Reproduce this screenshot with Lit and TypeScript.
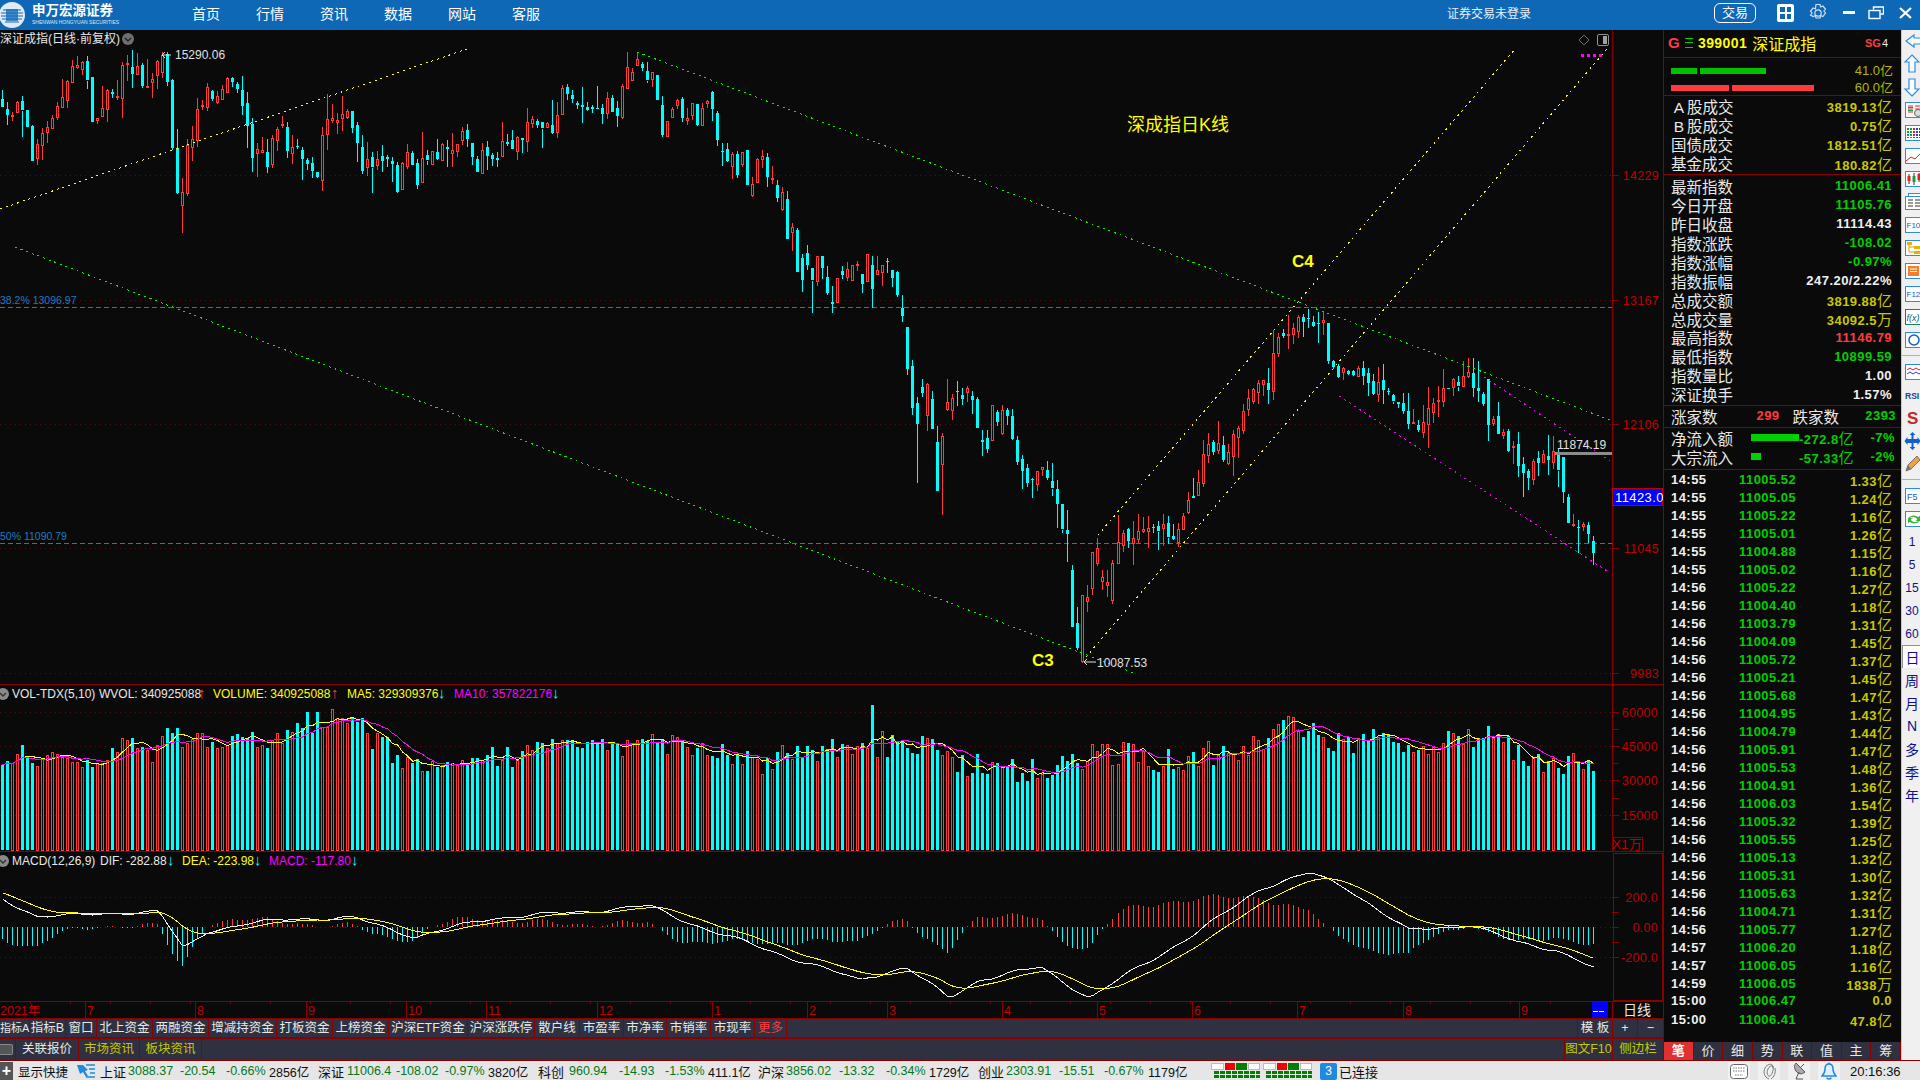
import { LitElement, html, css, svg } from 'lit';
import { customElement } from 'lit/decorators.js';

const FONT = '"Liberation Sans", "Noto Sans CJK SC", sans-serif';

// seeded random so the chart stays the same on every run
let seed = 20210916;
function rnd() {
  seed |= 0;
  seed = (seed + 0x6d2b79f5) | 0;
  let t = Math.imul(seed ^ (seed >>> 15), 1 | seed);
  t = (t + Math.imul(t ^ (t >>> 7), 61 | t)) ^ t;
  return ((t ^ (t >>> 14)) >>> 0) / 4294967296;
}

function interp(keys: number[][], x: number) {
  if (x <= keys[0][0]) return keys[0][1];
  for (let k = 1; k < keys.length; k++) {
    if (x <= keys[k][0]) {
      const [x0, y0] = keys[k - 1];
      const [x1, y1] = keys[k];
      return y0 + ((y1 - y0) * (x - x0)) / (x1 - x0);
    }
  }
  return keys[keys.length - 1][1];
}

// closes on the left stretch, [x, y] in page pixels
const LEFT_KEYS = [[0,100],[6,115],[11,118],[16,100],[26,113],[31,167],[37,147],[41,133],[51,122],[61,100],[66,85],[71,67],[76,63],[81,65],[86,62],[91,122],[96,117],[102,113],[106,90],[111,87],[116,107],[122,65],[127,62],[131,75],[137,65],[142,87],[146,85],[152,83],[156,60],[161,55],[167,80],[171,127],[176,190],[182,200],[187,143],[192,143],[196,108],[201,113],[206,85],[211,97],[216,95],[222,92],[227,77],[231,79],[237,88],[241,103],[247,118],[251,160],[256,148],[261,145],[267,172],[272,140],[278,125],[282,121],[287,153],[292,150],[298,145],[303,163],[308,163],[312,168],[318,180],[322,137],[328,119],[333,120],[338,120],[343,113],[348,112],[352,128],[357,137],[362,171],[367,160],[372,170],[378,157],[382,159],[388,160],[393,163],[398,192],[402,165],[408,150],[418,185],[422,160],[427,160],[433,153],[438,160],[443,143],[448,147],[453,148],[457,147],[462,132],[467,137],[472,155],[478,172],[482,148],[488,155],[493,157],[498,158],[503,137],[508,147],[513,148],[518,135],[522,140],[528,120],[533,117],[538,127],[543,128],[548,120],[553,132],[558,113],[562,89],[567,93],[572,97],[578,103],[583,110],[588,107],[593,107],[598,108],[603,112],[607,98],[613,112],[618,115],[622,88],[627,67],[633,70]];

// the middle stretch read candle by candle: top, bottom, up, wick top, wick bottom (x3 of page pixels from y=40)
const MID: number[][] = [[95,120,1,85,122],[58,77,1,35,77],[72,84,0,67,92],[94,122,0,67,128],[95,115,1,95,140],[105,180,0,105,180],[195,285,0,168,290],[244,290,1,244,290],[208,233,1,200,233],[181,196,1,177,206],[178,234,0,172,245],[233,239,1,205,254],[190,226,1,190,240],[192,255,0,192,258],[205,257,1,190,257],[184,190,1,180,203],[156,206,0,153,242],[220,300,0,213,317],[334,336,0,309,377],[328,363,0,309,366],[343,380,1,336,416],[342,405,0,334,413],[337,374,1,337,380],[330,435,0,330,435],[433,467,1,411,470],[358,428,1,355,428],[349,359,1,331,383],[351,410,0,339,440],[415,418,1,378,431],[435,473,0,420,485],[457,507,1,441,512],[477,596,0,453,596],[562,577,1,549,632],[570,695,0,564,695],[654,720,0,642,755],[640,675,0,615,689],[685,722,0,685,818],[649,725,1,649,737],[648,683,0,648,716],[712,760,0,678,765],[786,791,0,738,818],[715,788,1,715,788],[693,705,0,678,716],[688,712,1,666,722],[676,722,1,676,724],[672,675,1,663,692],[702,731,0,702,758],[643,725,1,643,725],[675,746,0,648,803],[691,704,1,648,704],[676,697,1,676,737],[663,666,0,654,698],[690,713,0,690,740],[696,765,0,693,770],[804,827,0,765,845],[861,986,0,861,1004],[978,1103,0,960,1124],[1089,1151,0,1071,1328],[1041,1058,0,1017,1070],[1033,1127,1,1030,1172],[1077,1166,0,1053,1166],[1206,1352,0,1158,1352],[1189,1273,1,1179,1424],[1087,1109,1,1017,1112],[1075,1111,1,1062,1139],[1053,1056,0,1023,1097],[1065,1077,0,1044,1094],[1045,1057,1,1038,1085],[1068,1080,0,1053,1121],[1077,1163,0,1071,1163],[1200,1205,0,1170,1247],[1194,1226,0,1170,1238],[1096,1202,1,1096,1202],[1116,1145,0,1110,1157],[1110,1178,1,1095,1184],[1110,1127,0,1104,1154]];

// right stretch closes, [x, y] in page pixels
const RIGHT_KEYS = [[1005,405],[1013,433],[1023,480],[1038,473],[1055,483],[1063,540],[1120,545],[1133,533],[1149,527],[1162,530],[1168,540],[1181,530],[1187,503],[1198,487],[1208,443],[1223,453],[1234,440],[1252,380],[1269,387],[1273,360],[1280,340],[1290,330],[1303,320],[1314,330],[1324,323],[1328,357],[1335,377],[1349,370],[1364,373],[1375,387],[1385,397],[1400,397],[1410,427],[1421,430],[1433,400],[1444,397],[1463,373],[1480,390],[1488,417],[1499,427],[1513,453],[1524,470],[1532,470],[1543,460],[1549,453],[1560,467],[1564,493],[1569,523],[1579,522],[1589,538],[1594,552]];

type Candle = { x: number; top: number; bot: number; up: boolean; hi: number; lo: number };

const COUNT = 319;
const xOf = (i: number) => Math.floor(2 + 5 * i + (i > 126 ? (i - 126) * 0.0104 : 0)) + 0.5;

// hand picked candles: index -> top, bottom, up, wick top, wick bottom
const PICKED: Record<number, number[]> = {
  32: [55, 72, 1, 52, 78],
  33: [54, 82, 0, 52, 86],
  36: [192, 205, 1, 178, 233],
  214: [570, 627, 0, 565, 627],
  215: [623, 648, 0, 607, 650],
  216: [595, 661, 1, 595, 663],
  217: [597, 601, 1, 585, 612],
  218: [552, 588, 1, 552, 595],
  219: [548, 563, 1, 538, 566],
  220: [577, 581, 1, 570, 590],
  221: [582, 585, 1, 570, 597],
  222: [563, 600, 1, 560, 604],
  223: [542, 563, 1, 515, 563],
  297: [379, 425, 0, 379, 441],
  312: [457, 492, 0, 457, 503],
  313: [497, 523, 0, 494, 523],
  318: [541, 553, 0, 536, 565],
};

function buildCandles(): Candle[] {
  const list: Candle[] = [];
  let prev = 100;
  for (let i = 0; i < COUNT; i++) {
    const x = xOf(i);
    const mid = MID[i - 126];
    const picked = PICKED[i];
    if (picked) {
      list.push({ x, top: picked[0], bot: picked[1], up: !!picked[2], hi: picked[3], lo: picked[4] });
      prev = picked[2] ? picked[0] : picked[1];
    } else if (mid) {
      const f = (v: number) => 40 + v / 3;
      list.push({ x, top: f(mid[0]), bot: f(mid[1]), up: !!mid[2], hi: f(mid[3]), lo: f(mid[4]) });
      prev = mid[2] ? f(mid[0]) : f(mid[1]);
    } else {
      const left = i < 126;
      const c = interp(left ? LEFT_KEYS : RIGHT_KEYS, x) + (rnd() - 0.5) * (left ? 5 : 18);
      const o = prev + (rnd() - 0.5) * 8;
      const top = Math.min(o, c);
      const bot = Math.max(o, c);
      list.push({ x, top, bot, up: c < o, hi: top - rnd() * rnd() * 30, lo: bot + rnd() * rnd() * 30 });
      prev = c;
    }
  }
  return list;
}
const CANDLES = buildCandles();

// volume bar tops, the first 127 read from the screenshot
const VOL_READ = [255,243,250,222,195,235,250,258,235,225,215,222,230,235,245,245,262,240,262,250,250,240,203,215,175,180,175,205,200,210,245,195,168,145,158,145,200,190,178,160,158,200,185,205,200,195,168,163,172,175,157,200,195,205,180,160,190,150,157,130,145,95,160,97,142,140,87,115,115,128,115,125,115,160,208,158,170,170,248,225,265,230,250,237,272,272,242,260,255,245,255,255,240,255,235,235,240,225,200,258,240,200,262,240,212,195,210,185,190,205,178,190,180,180,182,202,205,185,180,188,178,210,185,190,228,180,190,180];
const VOL_KEYS = [[640,745],[760,760],[860,740],[900,745],[1000,770],[1100,755],[1180,760],[1250,745],[1290,722],[1350,745],[1480,735],[1530,755],[1595,772]];
const VOL_TOPS = CANDLES.map((c, i) => {
  if (i < VOL_READ.length) return 680 + VOL_READ[i] / 3;
  if (i === 174) return 705;
  if (i === 318) return 771;
  return interp(VOL_KEYS, c.x) + (rnd() - 0.5) * 30;
});

function average(values: number[], size: number) {
  return values.map((_, i) => {
    const part = values.slice(Math.max(0, i - size + 1), i + 1);
    return part.reduce((a, b) => a + b, 0) / part.length;
  });
}

// DIF line, keys given on the shrunk picture so scaled by 1.2245
const DIF_KEYS = [[0,733],[30,748],[60,748],[100,745],[130,745],[150,775],[170,760],[200,755],[240,750],[290,750],[340,765],[400,750],[470,745],[530,740],[580,760],[640,780],[700,800],[740,790],[775,815],[800,800],[850,790],[890,815],[930,790],[980,760],[1030,725],[1070,713],[1100,725],[1150,760],[1200,755],[1240,770],[1270,775],[1302,791]].map(([x, y]) => [x * 1.2245, y * 1.2245]);
const DIF = CANDLES.map((c, i) => interp(DIF_KEYS, c.x) + 1.5 * Math.sin(i * 0.33) + Math.sin(i * 0.8));
const DEA: number[] = [];
DIF.forEach((v, i) => DEA.push(i === 0 ? v - 6 : DEA[i - 1] * 0.82 + v * 0.18));

const linePoints = (ys: number[]) => ys.map((y, i) => `${xOf(i)},${y.toFixed(1)}`).join(' ');

function bars(items: { x: number; top: number; bot: number; up: boolean }[]) {
  let red = '';
  let cyan = '';
  for (const b of items) {
    const top = Math.round(b.top) + 0.5;
    const h = Math.max(1, Math.round(b.bot - b.top));
    if (b.up) red += `M${b.x - 1} ${top}h2v${h}h-2z`;
    else cyan += `M${b.x - 1.5} ${top - 0.5}h3v${h}h-3z`;
  }
  return { red, cyan };
}

@customElement('kline-chart')
class KlineChart extends LitElement {
  static styles = css`
    :host {
      display: block;
      width: 1663px;
      height: 988px;
      background: #0a0a0a;
      overflow: hidden;
    }
    svg {
      display: block;
      font-family: ${css([FONT] as unknown as TemplateStringsArray)};
    }
    .crisp { shape-rendering: crispEdges; }
    .frame { stroke: #8a0000; stroke-width: 1; fill: none; shape-rendering: crispEdges; }
    .grid { stroke: #6a0c0c; stroke-width: 1; stroke-dasharray: 1 4; shape-rendering: crispEdges; }
    .fib { stroke: #1a7cc0; stroke-width: 1; stroke-dasharray: 5 3; shape-rendering: crispEdges; }
    .fibtext { fill: #1a7cc0; font-size: 10.5px; }
    .dot { fill: none; stroke-width: 1; stroke-dasharray: 2 4; shape-rendering: crispEdges; }
    .ma { fill: none; stroke-width: 1; shape-rendering: crispEdges; }
    .axis { fill: #c00000; font-size: 12.5px; letter-spacing: 0.3px; text-anchor: end; }
    .date { fill: #c00000; font-size: 12.5px; }
    .w { fill: #e8e8e8; font-size: 12px; }
    .y { fill: #ffff00; font-size: 12px; }
    .m { fill: #ff00ff; font-size: 12px; }
    .r { fill: #ff3c3c; font-size: 15px; font-weight: bold; }
    .c { fill: #00ffff; font-size: 15px; font-weight: bold; }
    .big { fill: #ffff00; font-size: 18px; }
    .tag { fill: #ffff00; font-size: 17px; font-weight: bold; }
    .price { fill: #e0e0e0; font-size: 12px; }
    .boxt { fill: #ffffff; font-size: 13px; letter-spacing: 0.4px; }
    .label { fill: #e8e8e8; font-size: 14px; text-anchor: middle; }
  `;

  private pane(top: number, height: number, body: unknown) {
    return svg`<svg width="1663" height=${height} viewBox="0 ${top} 1663 ${height}">${body}</svg>`;
  }

  private badge(y: number) {
    return svg`<circle cx="3" cy=${y} r="6" fill="#8a8a8a"/>
      <path d="M0 ${y - 1}l3 3 3-3" fill="none" stroke="#333" stroke-width="1.4"/>`;
  }

  private ticks(ys: number[]) {
    return ys.map((y) => svg`<line x1="1612" x2="1619" y1=${y + 0.5} y2=${y + 0.5} class="frame"/>`);
  }

  private pricePane() {
    const { red, cyan } = bars(CANDLES);
    let wickR = '';
    let wickC = '';
    for (const c of CANDLES) {
      const d = `M${c.x} ${Math.round(c.hi)}V${Math.round(c.top)}M${c.x} ${Math.round(c.bot)}V${Math.round(c.lo)}`;
      if (c.up) wickR += d;
      else wickC += d;
    }
    const grid = [175, 300, 424, 548, 673];
    const axis = [[14229, 175], [13167, 300], [12106, 424], [11045, 548], [9983, 673]];
    return svg`
      ${grid.map((y) => svg`<line x1="0" x2="1612" y1=${y + 0.5} y2=${y + 0.5} class="grid"/>`)}
      <line x1="0" x2="1612" y1="307.5" y2="307.5" class="fib"/>
      <line x1="0" x2="1612" y1="543.5" y2="543.5" class="fib"/>
      <text x="0" y="304" class="fibtext">38.2% 13096.97</text>
      <text x="0" y="540" class="fibtext">50% 11090.79</text>

      <path d=${wickR} stroke="#ff3c3c" fill="none" class="crisp"/>
      <path d=${wickC} stroke="#00ffff" fill="none" class="crisp"/>
      <path d=${red} stroke="#ff3c3c" fill="#0a0a0a" class="crisp"/>
      <path d=${cyan} fill="#00ffff" class="crisp"/>

      <line x1="0" y1="209" x2="470" y2="48" stroke="#ffff00" class="dot"/>
      <line x1="637" y1="52" x2="1610" y2="420" stroke="#00f000" class="dot"/>
      <line x1="15" y1="247" x2="1134" y2="673" stroke="#00f000" class="dot"/>
      <line x1="1098" y1="535" x2="1515" y2="49" stroke="#ffff00" class="dot"/>
      <line x1="1086" y1="657" x2="1607" y2="49" stroke="#ffff00" class="dot"/>
      <line x1="1339" y1="396" x2="1610" y2="573" stroke="#ff00ff" class="dot"/>
      <line x1="1484" y1="377" x2="1610" y2="461" stroke="#ff00ff" class="dot"/>

      <text x="0" y="43" class="w">深证成指(日线·前复权)</text>
      <circle cx="128" cy="39" r="6" fill="#6e6e6e"/>
      <path d="M125 38l3 3 3-3" fill="none" stroke="#222" stroke-width="1.4"/>

      <path d="M171 55h-9m3-3l-3 3 3 3" stroke="#e0e0e0" fill="none"/>
      <text x="175" y="59" class="price">15290.06</text>
      <path d="M1096 662h-12m3-3l-3 3 3 3" stroke="#e0e0e0" fill="none"/>
      <text x="1097" y="667" class="price">10087.53</text>
      <text x="1557" y="449" class="price">11874.19</text>
      <rect x="1555" y="452" width="57" height="3" fill="#8c8c8c"/>

      <text x="1127" y="131" class="big">深成指日K线</text>
      <text x="1292" y="267" class="tag">C4</text>
      <text x="1032" y="666" class="tag">C3</text>

      <path d="M1584 35l5 5-5 5-5-5z" fill="none" stroke="#707070"/>
      <rect x="1597.5" y="34.5" width="11" height="11" rx="1.5" fill="#0a0a0a" stroke="#909090"/>
      <rect x="1603" y="36" width="4" height="8" fill="#a0a0a0"/>
      <path d="M1581 55.5h3m3 0h3m3 0h3m3 0h3" stroke="#ff00ff" stroke-width="3" class="crisp"/>

      <line x1="1612.5" x2="1612.5" y1="30" y2="685" class="frame"/>
      ${this.ticks(grid)}
      ${axis.map(([v, y]) => svg`<text x="1659" y=${y + 5} class="axis">${v}</text>`)}
      <rect x="1612.5" y="488.5" width="50" height="17" fill="#0000ff" stroke="#c00000"/>
      <text x="1615" y="502" class="boxt">11423.0</text>
      <line x1="0" x2="1663" y1="684.5" y2="684.5" class="frame"/>
    `;
  }

  private volumePane() {
    const items = CANDLES.map((c, i) => ({ x: c.x, top: VOL_TOPS[i], bot: 850, up: c.up }));
    const { red, cyan } = bars(items);
    const ma5 = average(VOL_TOPS, 5);
    const ma10 = average(VOL_TOPS, 10);
    const grid = [712, 746, 780, 815];
    const axis = [[60000, 712], [45000, 746], [30000, 780], [15000, 815]];
    return svg`
      ${grid.map((y) => svg`<line x1="0" x2="1612" y1=${y + 0.5} y2=${y + 0.5} class="grid"/>`)}
      <path d=${red} stroke="#ff3c3c" fill="#0a0a0a" class="crisp"/>
      <path d=${cyan} fill="#00ffff" class="crisp"/>
      <polyline points=${linePoints(ma5)} class="ma" stroke="#ffff00"/>
      <polyline points=${linePoints(ma10)} class="ma" stroke="#ff00ff"/>
      ${this.badge(694)}
      <text y="698">
        <tspan x="12" class="w">VOL-TDX(5,10)</tspan>
        <tspan x="99" class="w">WVOL: 340925088</tspan>
        <tspan x="198" class="r">↑</tspan>
        <tspan x="213" class="y">VOLUME: 340925088</tspan>
        <tspan x="331" class="r">↑</tspan>
        <tspan x="347" class="y">MA5: 329309376</tspan>
        <tspan x="438" class="c">↓</tspan>
        <tspan x="454" class="m">MA10: 357822176</tspan>
        <tspan x="552" class="c">↓</tspan>
      </text>
      <line x1="1612.5" x2="1612.5" y1="685" y2="852" class="frame"/>
      ${this.ticks(grid)}
      ${this.ticks([729, 763, 798])}
      ${axis.map(([v, y]) => svg`<text x="1658" y=${y + 5} class="axis">${v}</text>`)}
      <rect x="1613.5" y="837.5" width="29" height="14" class="frame"/>
      <text x="1642" y="849" class="axis" style="font-size:13px">X1万</text>
      <line x1="0" x2="1663" y1="851.5" y2="851.5" class="frame"/>
    `;
  }

  private macdPane() {
    const zero = 927;
    const items = DIF.map((y, i) => ({ x: xOf(i), h: (DEA[i] - y) * 2 }));
    const up = items.filter((b) => b.h > 0).map((b) => `M${b.x} ${zero}V${(zero - b.h).toFixed(0)}`).join('');
    const down = items.filter((b) => b.h < 0).map((b) => `M${b.x} ${zero}V${(zero - b.h).toFixed(0)}`).join('');
    const grid = [897, 927, 957];
    const axis = [['200.0', 897], ['0.00', 927], ['-200.0', 957]];
    return svg`
      ${grid.map((y) => svg`<line x1="0" x2="1612" y1=${y + 0.5} y2=${y + 0.5} class="grid"/>`)}
      <path d=${up} stroke="#ff3c3c" class="crisp"/>
      <path d=${down} stroke="#00ffff" class="crisp"/>
      <polyline points=${linePoints(DIF)} class="ma" stroke="#f0f0f0"/>
      <polyline points=${linePoints(DEA)} class="ma" stroke="#ffff00"/>
      ${this.badge(861)}
      <text y="865">
        <tspan x="12" class="w">MACD(12,26,9)</tspan>
        <tspan x="100" class="w">DIF: -282.88</tspan>
        <tspan x="167" class="c">↓</tspan>
        <tspan x="182" class="y">DEA: -223.98</tspan>
        <tspan x="254" class="c">↓</tspan>
        <tspan x="269" class="m">MACD: -117.80</tspan>
        <tspan x="351" class="c">↓</tspan>
      </text>
      <rect x="1613.5" y="853.5" width="49" height="147" class="frame"/>
      ${this.ticks(grid)}
      ${this.ticks([912, 942])}
      ${axis.map(([v, y]) => svg`<text x="1658" y=${(y as number) + 5} class="axis">${v}</text>`)}
      <line x1="0" x2="1663" y1="1001.5" y2="1001.5" class="frame"/>
    `;
  }

  private datePane() {
    const marks: [string, number][] = [['2021年', -2], ['7', 85], ['8', 195], ['9', 306], ['10', 406], ['11', 486], ['12', 597], ['1', 712], ['2', 807], ['3', 887], ['4', 1002], ['5', 1097], ['6', 1192], ['7', 1297], ['8', 1403], ['9', 1519]];
    const minor = Array.from({ length: 39 }, (_, i) => 30 + i * 40);
    return svg`
      ${minor.map((x) => svg`<line x1=${x + 0.5} x2=${x + 0.5} y1="1002" y2="1004" class="frame"/>`)}
      ${marks.map(([t, x]) => svg`
        <line x1=${x + 0.5} x2=${x + 0.5} y1="1002" y2="1018" class="frame"/>
        <text x=${x + 2} y="1015" class="date">${t}</text>`)}
      <rect x="1592" y="1002" width="16" height="16" fill="#0000ff"/>
      <path d="M1593 1011h5m1 0h5" stroke="#fff" class="crisp"/>
      <line x1="1612.5" x2="1612.5" y1="1002" y2="1018" class="frame"/>
      <text x="1637" y="1015" class="label">日线</text>
    `;
  }

  render() {
    return html`
      ${this.pane(30, 655, this.pricePane())}
      ${this.pane(685, 167, this.volumePane())}
      ${this.pane(852, 150, this.macdPane())}
      ${this.pane(1002, 16, this.datePane())}
    `;
  }
}

const TRADES = [
  ['14:55','11005.52','1.33亿'],['14:55','11005.05','1.24亿'],['14:55','11005.22','1.16亿'],['14:55','11005.01','1.26亿'],
  ['14:55','11004.88','1.15亿'],['14:55','11005.02','1.16亿'],['14:56','11005.22','1.27亿'],['14:56','11004.40','1.18亿'],
  ['14:56','11003.79','1.31亿'],['14:56','11004.09','1.45亿'],['14:56','11005.72','1.37亿'],['14:56','11005.21','1.45亿'],
  ['14:56','11005.68','1.47亿'],['14:56','11004.95','1.43亿'],['14:56','11004.79','1.44亿'],['14:56','11005.91','1.47亿'],
  ['14:56','11005.53','1.48亿'],['14:56','11004.91','1.36亿'],['14:56','11006.03','1.54亿'],['14:56','11005.32','1.39亿'],
  ['14:56','11005.55','1.25亿'],['14:56','11005.13','1.32亿'],['14:56','11005.31','1.30亿'],['14:56','11005.63','1.32亿'],
  ['14:56','11004.71','1.31亿'],['14:56','11005.77','1.27亿'],['14:57','11006.20','1.18亿'],['14:57','11006.05','1.16亿'],
  ['14:59','11006.05','1838万'],['15:00','11006.47','0.0'],['15:00','11006.41','47.8亿'],
];

const SUMMARY = [['A股成交','3819.13亿'],['B股成交','0.75亿'],['国债成交','1812.51亿'],['基金成交','180.82亿']];
const QUOTES = [
  ['最新指数','11006.41','g'],['今日开盘','11105.76','g'],['昨日收盘','11114.43','w'],['指数涨跌','-108.02','g'],
  ['指数涨幅','-0.97%','g'],['指数振幅','247.20/2.22%','w'],['总成交额','3819.88亿','y'],['总成交量','34092.5万','y'],
  ['最高指数','11146.79','r'],['最低指数','10899.59','g'],['指数量比','1.00','w'],['深证换手','1.57%','w'],
];
const PANEL_TABS = ['笔','价','细','势','联','值','主','筹'];

@customElement('quote-panel')
class QuotePanel extends LitElement {
  static styles = css`
    :host {
      display: flex;
      flex-direction: column;
      width: 238px;
      height: 1030px;
      box-sizing: border-box;
      background: #0a0a0a;
      color: #e8e8e8;
      font-family: ${css([FONT] as unknown as TemplateStringsArray)};
      font-size: 15.5px;
      border-left: 1px solid #8a0000;
    }
    section { box-sizing: border-box; border-bottom: 1px solid #8a0000; }
    .head { height: 28px; display: flex; align-items: center; padding: 0 0 2px 4px; color: #ffff00; position: relative; }
    .head .g { color: #ff3c3c; font-size: 15px; font-weight: bold; width: 17px; }
    .head .lines { width: 8px; height: 8px; margin-right: 5px; border-top: 1px solid #00d000; border-bottom: 1px solid #00d000; position: relative; }
    .head .lines i { position: absolute; left: 0; right: 0; top: 3px; border-top: 1px solid #00d000; }
    .head b { font-size: 14px; letter-spacing: 0.4px; margin: 0 5px 0 0; }
    .head .name { font-size: 16px; }
    .head .sg { position: absolute; right: 13px; top: 7px; font-size: 11px; font-weight: bold; color: #ff3c3c; }
    .head .sg span { color: #e8e8e8; font-weight: normal; margin-left: 1px; }
    .flow { height: 38px; padding: 6px 8px 0 7px; display: grid; grid-template-columns: 1fr auto; row-gap: 3px; align-items: center; }
    .flow .bar { display: flex; gap: 3px; height: 6px; }
    .flow .bar i { display: block; height: 6px; }
    .flow .num { color: #b4b400; font-size: 13px; line-height: 12px; text-align: right; }
    .block-a { height: 79px; padding-top: 0; }
    .block-b { height: 231px; padding-top: 1.5px; }
    .row { display: flex; justify-content: space-between; align-items: center; padding: 0 9px 0 7px; white-space: nowrap; }
    .block-a .row { height: 19.2px; }
    .block-b .row { height: 18.95px; }
    .cell { display: inline-block; width: 16px; text-align: center; }
    .val { font-size: 13px; font-weight: bold; letter-spacing: 0.45px; }
    .unit { font-size: 15px; font-weight: normal; letter-spacing: 0; }
    .g2 { color: #00d000; }
    .y2 { color: #c8c800; }
    .r2 { color: #ff3c3c; }
    .w2 { color: #f0f0f0; }
    .counts { height: 22px; display: flex; align-items: center; padding: 0 5px 2px 7px; }
    .counts .n1 { width: 62px; text-align: right; margin-right: 13px; }
    .counts .n2 { flex: 1; text-align: right; }
    .money { height: 42px; padding-top: 0; }
    .money .mrow { height: 19px; display: flex; align-items: center; padding-left: 7px; white-space: nowrap; }
    .money .lbl { width: 80px; }
    .money .track { width: 48px; height: 7px; }
    .money .track i { display: block; height: 7px; background: #00d000; }
    .money .amt { width: 58px; }
    .money .pct { width: 38px; text-align: right; }
    .trades { flex: 1; margin-top: -1px; }
    .trade { height: 18.02px; display: grid; grid-template-columns: 68px 60px 1fr; padding: 0 9px 0 7px; align-items: center; white-space: nowrap; }
    .trade .v { text-align: right; }
    .tabs { height: 18px; display: flex; background: #2f3140; }
    .tabs span { flex: 1; text-align: center; font-size: 13px; line-height: 18px; border-right: 1px solid #8a0000; }
    .tabs .on { background: #e03030; color: #fff; font-weight: bold; }
  `;

  private val(text: string, cls: string) {
    const m = text.match(/^(.*?)([亿万]?)$/)!;
    return html`<span class="val ${cls}">${m[1]}${m[2] ? html`<span class="unit">${m[2]}</span>` : ''}</span>`;
  }

  private label(text: string) {
    if (/^[AB]/.test(text)) return html`<span><span class="cell">${text[0]}</span>${text.slice(1)}</span>`;
    return html`<span>${text}</span>`;
  }

  render() {
    return html`
      <section class="head">
        <span class="g">G</span>
        <span class="lines"><i></i></span>
        <b>399001</b><span class="name">深证成指</span>
        <span class="sg">SG<span>4</span></span>
      </section>
      <section class="flow">
        <div class="bar"><i style="width:26px;background:#00c000"></i><i style="width:66px;background:#00c000"></i></div>
        <div class="num">41.0亿</div>
        <div class="bar"><i style="width:58px;background:#ff3c3c"></i><i style="width:82px;background:#ff3c3c"></i></div>
        <div class="num">60.0亿</div>
      </section>
      <section class="block-a">
        ${SUMMARY.map(([l, v]) => html`<div class="row">${this.label(l)}${this.val(v, 'y2')}</div>`)}
      </section>
      <section class="block-b">
        ${QUOTES.map(([l, v, c]) => html`<div class="row">${this.label(l)}${this.val(v, c + '2')}</div>`)}
      </section>
      <section class="counts">
        <span>涨家数</span><span class="val r2 n1">299</span><span>跌家数</span><span class="val g2 n2">2393</span>
      </section>
      <section class="money">
        <div class="mrow">
          <span class="lbl">净流入额</span>
          <span class="track"><i style="width:48px"></i></span>
          ${this.val('-272.8亿', 'g2 amt')}${this.val('-7%', 'g2 pct')}
        </div>
        <div class="mrow">
          <span class="lbl">大宗流入</span>
          <span class="track"><i style="width:10px"></i></span>
          ${this.val('-57.33亿', 'g2 amt')}${this.val('-2%', 'g2 pct')}
        </div>
      </section>
      <div class="trades">
        ${TRADES.map(([t, p, v]) => html`
          <div class="trade">
            <span class="val w2">${t}</span>
            ${this.val(p, 'g2')}
            <span class="v">${this.val(v, 'y2')}</span>
          </div>`)}
      </div>
      <div class="tabs">
        ${PANEL_TABS.map((t, i) => html`<span class=${i === 0 ? 'on' : ''}>${t}</span>`)}
      </div>
    `;
  }
}

const ic = (body: unknown) => svg`<svg width="22" height="20" viewBox="0 0 22 20">${body}</svg>`;
const boxed = (body: unknown, stroke = '#2a8ce8') => ic(svg`<rect x="0.5" y="2.5" width="24" height="15" fill="#fff" stroke=${stroke}/>${body}`);
const TOOL_TOP = [
  ic(svg`<path d="M1 10l8-6v3h11v6H9v3z" fill="#fff" stroke="#2a8ce8" stroke-width="1.2"/>`),
  ic(svg`<path d="M7 1l7 7h-4v10H4V8H0z" fill="#fff" stroke="#2a8ce8" stroke-width="1.2"/>`),
  ic(svg`<path d="M7 19l7-7h-4V2H4v10H0z" fill="#fff" stroke="#2a8ce8" stroke-width="1.2"/>`),
  boxed(svg`<path d="M3 6h5m2 0h5M3 9h5m2 0h5M3 12h5" stroke="#e02020"/><path d="M3 7.5h5M3 10.5h5" stroke="#10a040"/><circle cx="13" cy="13" r="3.5" fill="#ddd" stroke="#666"/>`),
  boxed(svg`<path d="M3 5v10M6 5v10" stroke="#10a040" stroke-dasharray="2 1" stroke-width="2"/><path d="M9 5v10" stroke="#e02020" stroke-dasharray="2 1" stroke-width="2"/><path d="M12 5v10M15 5v10" stroke="#2040e0" stroke-dasharray="2 1" stroke-width="2"/>`),
  boxed(svg`<path d="M1 15l5-4 4 2 5-5 5-2" fill="none" stroke="#e02020"/>`),
  boxed(svg`<path d="M4 5v10M9 4v12M14 4v9" stroke="#333"/><rect x="2.5" y="7" width="3" height="5" fill="#e02020"/><rect x="7.5" y="7" width="3" height="6" fill="#10a040"/><rect x="12.500" y="5" width="3" height="6" fill="#e02020"/>`),
  ic(svg`<rect x="3.5" y="1.5" width="12" height="5" fill="#fff" stroke="#2a8ce8"/><rect x="0.5" y="4.5" width="24" height="13" fill="#fff" stroke="#2a8ce8"/><path d="M3 8h5m2 0h6M3 11h5m2 0h6M3 14h5m2 0h6" stroke="#333"/>`),
  boxed(svg`<text x="1.500" y="13" font-size="8" fill="#1060c0">F10</text>`),
  boxed(svg`<path d="M4 5v9h5M4 9h5" fill="none" stroke="#e0a000"/><rect x="2" y="4" width="5" height="3" fill="#e8b000"/><rect x="9" y="8" width="6" height="3" fill="#e8b000"/><rect x="9" y="13" width="6" height="3" fill="#e8b000"/>`),
  boxed(svg`<rect x="3" y="5" width="11" height="10" fill="#f08030"/><path d="M5 8h7M5 10.500h7" stroke="#fff"/>`),
  boxed(svg`<text x="1.500" y="13" font-size="8" fill="#1060c0">F12</text>`),
  boxed(svg`<text x="1.500" y="13.500" font-size="9" font-style="italic" fill="#106060">f(x)</text>`, '#108070'),
  boxed(svg`<circle cx="9" cy="10" r="5" fill="none" stroke="#1060c0" stroke-width="1.5"/>`),
];
const TOOL_MID = [
  boxed(svg`<path d="M2 8l3-2 3 2 3-2 3 2 3-2" fill="none" stroke="#e02020"/><path d="M2 12l3-2 3 2 3-2 3 2 3-2" fill="none" stroke="#2040e0"/>`),
  ic(svg`<text x="0" y="13.500" font-size="8.5" font-weight="bold" fill="#2040a0">RSI</text>`),
  ic(svg`<text x="2" y="16" font-size="17" font-weight="bold" fill="#c02828">S</text>`),
  ic(svg`<path d="M7.500 1l3 3h-2v4h4V6l3 4-3 4v-2h-4v4h2l-3 3-3-3h2v-4h-4v2l-3-4 3-4v2h4V4h-2z" fill="#1060d0"/>`),
  ic(svg`<path d="M1 17l2-6L12 2l3 4-9 9z" fill="#f0a040" stroke="#777"/><path d="M1 17l2-6 3 4z" fill="#777"/>`),
];
const TOOL_END = [
  boxed(svg`<text x="2" y="13.500" font-size="9" fill="#1060c0">F5</text>`),
  boxed(svg`<path d="M3 10a6 5 0 0 1 10-2l2-1v5h-5l2-1a4 3 0 0 0-8 0zM15 11a6 5 0 0 1-10 2l-2 1v-5h5l-2 1a4 3 0 0 0 8 0z" fill="#40b040"/>`),
];
const PERIODS = ['1','5','15','30','60'];
const CYCLES = ['日','周','月','N','多','季','年'];

@customElement('side-toolbar')
class SideToolbar extends LitElement {
  static styles = css`
    :host {
      display: block;
      width: 19px;
      height: 1030px;
      box-sizing: border-box;
      background: #f0f0f0;
      border-left: 1px solid #c8c8c8;
      overflow: hidden;
      font-family: ${css([FONT] as unknown as TemplateStringsArray)};
    }
    .list { margin-top: -1px; }
    .cell { height: 23px; display: flex; align-items: center; padding-left: 3px; overflow: hidden; }
    .cell svg { flex: none; overflow: visible; }
    .sep { height: 9px; display: flex; align-items: center; }
    .sep i { display: block; width: 100%; border-top: 1px solid #b0b0b0; }
    .txt { justify-content: center; padding-left: 2px; color: #10108c; font-size: 12px; white-space: nowrap; }
    .cyc { font-size: 14px; }
    .on { background: #fff; border-left: 1px solid #909090; border-top: 1px solid #909090; box-sizing: border-box; }
  `;

  render() {
    const icon = (t: unknown) => html`<div class="cell">${t}</div>`;
    return html`
      <div class="list">
        ${TOOL_TOP.map(icon)}
        <div class="sep"><i></i></div>
        ${TOOL_MID.map(icon)}
        <div class="sep"><i></i></div>
        ${TOOL_END.map(icon)}
        ${PERIODS.map((p) => html`<div class="cell txt">${p}</div>`)}
        ${CYCLES.map((c, i) => html`<div class="cell txt cyc ${i === 0 ? 'on' : ''}">${c}</div>`)}
      </div>
    `;
  }
}

const TABS_TOP: [string, number, string?][] = [['指标A',30,'fit'],['指标B',36],['窗口',31],['北上资金',56],['两融资金',56],['增减持资金',68],['打板资金',56],['上榜资金',56],['沪深ETF资金',79],['沪深涨跌停',67],['散户线',45],['市盈率',44],['市净率',43],['市销率',44],['市现率',44],['更多',32,'red']];
const TABS_BOTTOM: [string, number, string?][] = [['关联报价',63],['市场资讯',61,'yel'],['板块资讯',62,'yel']];

const INDEX_ROW: [string, string, number][] = [
  ['上证','l',28],['3088.37','n',52],['-20.54','n',46],['-0.66%','n',43],['2856亿','v',49],
  ['深证','l',29],['11006.4','n',49],['-108.02','n',49],['-0.97%','n',43],['3820亿','v',50],
  ['科创','l',31],['960.94','n',50],['-14.93','n',46],['-1.53%','n',43],['411.1亿','v',50],
  ['沪深','l',28],['3856.02','n',53],['-13.32','n',47],['-0.34%','n',43],['1729亿','v',49],
  ['创业','l',28],['2303.91','n',53],['-15.51','n',45],['-0.67%','n',44],['1179亿','v',52],
];

@customElement('app-root')
class AppRoot extends LitElement {
  static styles = css`
    :host {
      display: flex;
      flex-direction: column;
      width: 1920px;
      height: 1080px;
      overflow: hidden;
      background: #0a0a0a;
      font-family: ${css([FONT] as unknown as TemplateStringsArray)};
    }
    .top { height: 30px; flex: none; display: flex; align-items: center; background: #0f68b5; color: #fff; }
    .logo { width: 174px; flex: none; height: 30px; display: flex; align-items: flex-start; }
    .logo .mark { margin: 2px 7px 0 -1px; flex: none; }
    .logo .words { display: flex; flex-direction: column; padding-top: 2px; width: 82px; }
    .logo b { font-size: 13.5px; line-height: 17px; letter-spacing: 0; white-space: nowrap; }
    .logo small { font-size: 5px; line-height: 6px; white-space: nowrap; color: #d8e8f5; }
    .nav { display: flex; font-size: 14px; margin-top: -5px; }
    .nav span { width: 64px; text-align: center; }
    .login { margin-left: 889px; width: 84px; font-size: 12px; white-space: nowrap; color: #e8f0f8; margin-top: -5px; }
    .controls { margin-left: 183px; display: flex; align-items: center; }
    .trade-btn { width: 42px; height: 20px; box-sizing: border-box; border: 1px solid #fff; border-radius: 6px; font-size: 13px; line-height: 18px; text-align: center; margin-right: 21px; margin-top: -5px; }
    .controls svg { display: block; flex: none; margin-top: -5px; }
    .body { flex: 1; display: flex; min-height: 0; }
    .left { width: 1663px; flex: none; display: flex; flex-direction: column; }
    .bar { display: flex; box-sizing: border-box; background: #2f3140; color: #e8e8e8; font-size: 12.5px; border-top: 1px solid #8a0000; white-space: nowrap; overflow: hidden; }
    .bar-a { height: 20px; border-bottom: 1px solid #8a0000; }
    .bar-b { height: 22px; }
    .bar span { flex: none; text-align: center; box-sizing: border-box; border-right: 1px solid #8a0000; line-height: 18px; }
    .bar-b span { line-height: 20px; }
    .bar .fit { font-size: 11px; }
    .bar .yel { color: #c8c800; }
    .bar .red { color: #ff3c3c; }
    .bar .push { margin-left: auto; border-left: 1px solid #8a0000; }
    .bar .last { border-right: 0; }
    .bar .box { width: 16px; display: flex; align-items: center; padding-left: 0; }
    .bar .box i { display: block; width: 12px; height: 9px; background: #555; border: 1px solid #888; border-left: 0; border-radius: 0 2px 2px 0; }
    .status { height: 20px; flex: none; display: flex; align-items: center; background: #e6e6e6; color: #101010; font-size: 12.5px; white-space: nowrap; border-top: 1px solid #8a0000; box-sizing: border-box; padding-top: 1px; }
    .plus { width: 13px; height: 19px; flex: none; background: #555; color: #fff; font-size: 16px; font-weight: bold; line-height: 18px; text-align: center; }
    .quick { width: 59px; margin-left: 5px; flex: none; font-size: 12.5px; }
    .status .flag { width: 23px; flex: none; display: flex; }
    .status .l { font-size: 13px; }
    .status .n { color: #007a20; font-size: 12.5px; }
    .status .v { font-size: 12.5px; }
    .status .item { flex: none; overflow: hidden; }
    .mini { display: flex; gap: 3px; flex: none; margin-left: 11px; }
    .mini .group { width: 49px; }
    .cells { display: flex; gap: 1px; height: 7px; }
    .cells i { flex: 1; background: #fff; border: 1px solid #bbb; box-sizing: border-box; }
    .cells .red { background: #f00000; border: 0; }
    .cells .gre { background: #008000; border: 0; }
    .dash { margin: 1px 0 0 3px; height: 8px; background: repeating-linear-gradient(90deg, #008000 0 5px, transparent 5px 6px), #e6e6e6; -webkit-mask: repeating-linear-gradient(180deg, #000 0 3px, transparent 3px 4px); mask: repeating-linear-gradient(180deg, #000 0 3px, transparent 3px 4px); }
    .net { width: 17px; height: 17px; background: #1e8ae0; color: #fff; border-radius: 2px; font-size: 12px; line-height: 17px; text-align: center; margin-left: 8px; flex: none; }
    .link { margin-left: 2px; font-size: 13px; flex: none; }
    .tray { margin-left: auto; display: flex; align-items: center; gap: 8px; flex: none; }
    .tray .slot { width: 22px; height: 19px; background: #f0f0f0; display: flex; align-items: center; justify-content: center; }
    .clock { font-size: 13px; margin-left: 2px; width: 70px; }
  `;

  private tabCell(t: [string, number, string?]) {
    return html`<span class=${t[2] ?? ''} style=${`width:${t[1]}px`}>${t[0]}</span>`;
  }

  private miniGroup() {
    return html`<div class="group">
      <div class="cells"><i></i><i class="red"></i><i class="gre"></i><i></i></div>
      <div class="dash"></div>
    </div>`;
  }

  render() {
    return html`
      <header class="top">
        <div class="logo">
          <svg class="mark" width="26" height="26" viewBox="0 0 26 26">
            <circle cx="13" cy="13" r="13" fill="#dfeaf5"/>
            <path d="M4 8h18M2 11h22M2 14h22M3 17h20M6 20h14" stroke="#0f68b5" stroke-width="1"/>
            <path d="M7 7h12v12H7z" fill="#0f68b5" opacity="0.75"/>
          </svg>
          <div class="words"><b>申万宏源证券</b><small>SHENWAN HONGYUAN SECURITIES</small></div>
        </div>
        <nav class="nav"><span>首页</span><span>行情</span><span>资讯</span><span>数据</span><span>网站</span><span>客服</span></nav>
        <div class="login">证券交易未登录</div>
        <div class="controls">
          <div class="trade-btn">交易</div>
          <svg width="17" height="18" viewBox="0 0 17 18" style="margin-right:14px">
            <rect width="17" height="18" rx="2" fill="#fff"/>
            <path d="M3 3h5v5H3zM10 3h4v5h-4zM3 10h5v5H3zM10 10h4v5h-4z" fill="#0f68b5"/>
          </svg>
          <svg width="20" height="20" viewBox="0 0 20 20" style="margin-right:15px">
            <path d="M8 1.5h4l.6 2.5 2.3-1 2.6 3-1.6 2 1.6 2-2.6 3.5-2.3-1-.6 2.5H8l-.6-2.5-2.3 1L2.500 12l1.600-2-1.600-2 2.600-3 2.300 1z" fill="none" stroke="#cfe0f0" stroke-width="1.2"/>
            <circle cx="10" cy="10" r="3.2" fill="none" stroke="#cfe0f0" stroke-width="1.2"/>
          </svg>
          <svg width="12" height="4" viewBox="0 0 12 4" style="margin-right:13px"><rect width="12" height="3" fill="#fff"/></svg>
          <svg width="16" height="14" viewBox="0 0 16 14" style="margin-right:15px">
            <path d="M5.500 3.500V1h10v7h-3" fill="none" stroke="#fff" stroke-width="1.4"/>
            <rect x="1" y="4.500" width="11" height="8" fill="#0f68b5" stroke="#fff" stroke-width="1.4"/>
          </svg>
          <svg width="13" height="12" viewBox="0 0 13 12"><path d="M1 1l11 10M12 1L1 11" stroke="#fff" stroke-width="2.2"/></svg>
        </div>
      </header>

      <div class="body">
        <div class="left">
          <kline-chart></kline-chart>
          <div class="bar bar-a">
            ${TABS_TOP.map((t) => this.tabCell(t))}
            <span class="push" style="width:36px">模 板</span><span style="width:25px">+</span><span class="last" style="width:25px">−</span>
          </div>
          <div class="bar bar-b">
            <span class="box"><i></i></span>
            ${TABS_BOTTOM.map((t) => this.tabCell(t))}
            <span class="push yel" style="width:49px">图文F10</span><span class="last yel" style="width:50px">侧边栏</span>
          </div>
        </div>
        <quote-panel></quote-panel>
        <side-toolbar></side-toolbar>
      </div>

      <footer class="status">
        <div class="plus">+</div>
        <div class="quick">显示快捷</div>
        <div class="flag">
          <svg width="18" height="14" viewBox="0 0 18 14">
            <path d="M0 1h6l5 5-3 1 3 5-2 1-3-5-3 2z" fill="#1e8ae0"/>
            <path d="M9 1h9M12 5h6M13 9h5M9 13h9" stroke="#1e8ae0" stroke-width="1.6"/>
          </svg>
        </div>
        ${INDEX_ROW.map(([t, c, w]) => html`<span class="item ${c}" style=${`width:${w}px`}>${t}</span>`)}
        <div class="mini">${this.miniGroup()}${this.miniGroup()}</div>
        <div class="net">3</div>
        <div class="link">已连接</div>
        <div class="tray">
          <div class="slot"><svg width="18" height="15" viewBox="0 0 18 15"><rect x="0.500" y="0.500" width="17" height="14" rx="3" fill="#fff" stroke="#666"/><path d="M3 4h12M3 7h12M5 11h8" stroke="#777" stroke-dasharray="1.500 1"/></svg></div>
          <div class="slot"><svg width="16" height="17" viewBox="0 0 16 17"><path d="M8 16C3 14 2 9 4 5s7-5 8-2-1 9-3 10-4-3-2-7 5-4 5-1" fill="none" stroke="#777"/><path d="M10 16c3-2 5-6 4-11" fill="none" stroke="#777"/></svg></div>
          <div class="slot"><svg width="17" height="18" viewBox="0 0 17 18"><path d="M5 1l9 9c-3 3-7 2-9-1S3 3 5 1z" fill="#aaa" stroke="#555"/><path d="M8 10l-3 7h7M10 5l3-3" fill="none" stroke="#555"/></svg></div>
          <div class="slot"><svg width="16" height="18" viewBox="0 0 16 18"><path d="M8 2c3 0 4 2 4 5 0 3 1 5 3 7H1c2-2 3-4 3-7 0-3 1-5 4-5z" fill="#e0f0ff" stroke="#1e8ae0" stroke-width="1.500"/><path d="M6 15.500c0 2 4 2 4 0" fill="none" stroke="#1e8ae0" stroke-width="1.500"/><circle cx="8" cy="1.500" r="1" fill="#1e8ae0"/></svg></div>
          <div class="clock">20:16:36</div>
        </div>
      </footer>
    `;
  }
}
